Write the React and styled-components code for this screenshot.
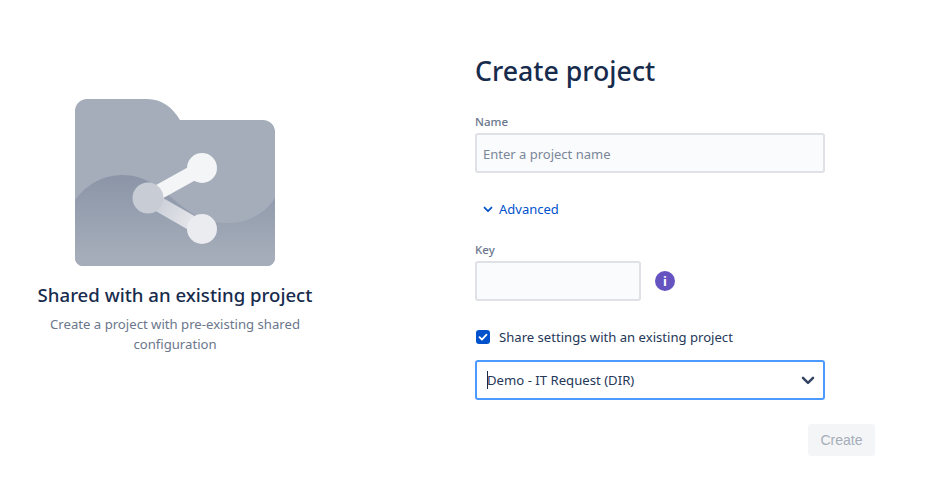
import styled, { createGlobalStyle } from "styled-components"

const GlobalStyle = createGlobalStyle`
    html, body {
        margin: 0;
        padding: 0;
        background: #fff;
        font-family: "Noto Sans", "Open Sans", sans-serif;
    }
`
const Page = styled.div`
    display: flex;
    width: 934px;
    height: 497px;
    overflow: hidden;
`
const Intro = styled.div`
    width: 350px;
    margin-right: 125px;
    padding-top: 99px;
    display: flex;
    flex-direction: column;
    align-items: center;
    box-sizing: border-box;
`
const Folder = styled.svg`
    display: block;
    width: 200px;
    height: 167px;
`
const IntroTitle = styled.h2`
    margin: 16px 0 0;
    font-size: 18.6px;
    line-height: 26px;
    font-weight: 500;
    color: #172b4d;
`
const IntroText = styled.p`
    margin: 6px 0 0;
    width: 290px;
    font-size: 13.15px;
    line-height: 20px;
    text-align: center;
    color: #6b778c;
`
const Form = styled.div`
    width: 400px;
    padding-top: 50px;
    display: flex;
    flex-direction: column;
    box-sizing: border-box;
`
const Title = styled.h1`
    margin: 0;
    height: 42px;
    font-size: 26.7px;
    line-height: 42px;
    font-weight: 500;
    color: #172b4d;
`
const Label = styled.label`
    display: block;
    font-size: 11.5px;
    line-height: 16px;
    font-weight: 500;
    color: #6b778c;
    margin-top: ${props => props.top}px;
    margin-bottom: 3px;
`
const Input = styled.input`
    display: block;
    box-sizing: border-box;
    width: ${props => props.width}px;
    height: 40px;
    padding: 1px 6px 0;
    border: 2px solid #dfe1e6;
    border-radius: 3px;
    background: #fafbfc;
    font: 13px "Noto Sans", sans-serif;
    color: #172b4d;
    outline: none;
    &::placeholder {
        color: #7a869a;
        opacity: 1;
    }
`
const Advanced = styled.div`
    display: flex;
    align-items: center;
    gap: 4px;
    margin: 26px 0 0 6px;
    height: 20px;
    font-size: 13px;
    color: #0052cc;
`
const KeyRow = styled.div`
    display: flex;
    align-items: center;
    gap: 14px;
`
const InfoBadge = styled.span`
    width: 20px;
    height: 20px;
    border-radius: 50%;
    background: #6554c0;
    color: #fff;
    display: flex;
    align-items: center;
    justify-content: center;
    font-size: 13px;
    font-weight: 700;
    line-height: 1;
`
const ShareRow = styled.div`
    display: flex;
    align-items: center;
    gap: 9px;
    margin: 26px 0 0 1px;
    height: 20px;
    font-size: 13.1px;
    color: #253858;
`
const Check = styled.span`
    width: 14px;
    height: 14px;
    border-radius: 3px;
    background: #0052cc;
    display: flex;
    align-items: center;
    justify-content: center;
`
const Select = styled.div`
    position: relative;
    box-sizing: border-box;
    width: 350px;
    height: 40px;
    margin-top: 13px;
    padding: 0 5px 0 10px;
    display: flex;
    align-items: center;
    justify-content: space-between;
    border: 2px solid #4c9aff;
    border-radius: 3px;
    font-size: 13.15px;
    color: #253858;
`
const Caret = styled.span`
    position: absolute;
    left: 10px;
    top: 9px;
    width: 1px;
    height: 18px;
    background: #172b4d;
`
const Footer = styled.div`
    display: flex;
    justify-content: flex-end;
    margin-top: 24px;
`
const CreateButton = styled.button`
    width: 67px;
    height: 32px;
    border: 0;
    border-radius: 3px;
    background: #f4f5f7;
    color: #a5adba;
    font: 14px "Liberation Sans", Arial, sans-serif;
`

const Chevron = ({ color, size }) => (
    <svg width={size} height={size} viewBox="0 0 24 24">
        <path d="M6 9.5l6 6 6-6" fill="none" stroke={color} strokeWidth="3" strokeLinecap="round" strokeLinejoin="round" />
    </svg>
)

const FolderArt = () => (
    <Folder viewBox="0 0 200 167">
        <defs>
            <linearGradient id="wave" x1="0" y1="0" x2="0" y2="1">
                <stop offset="0" stopColor="#8b95a7" />
                <stop offset="0.9" stopColor="#a5adba" />
            </linearGradient>
            <linearGradient id="link" gradientUnits="userSpaceOnUse" x1="73" y1="99" x2="127" y2="130">
                <stop offset="0" stopColor="#c5c9d2" />
                <stop offset="1" stopColor="#ebecf0" />
            </linearGradient>
            <clipPath id="body">
                <path d="M0 12a12 12 0 0 1 12-12h60c15 0 26 9 33 21h83a12 12 0 0 1 12 12v126a8 8 0 0 1-8 8H8a8 8 0 0 1-8-8z" />
            </clipPath>
        </defs>
        <g clipPath="url(#body)">
            <rect width="200" height="167" fill="#a5adba" />
            <path d="M0 101c12-16 28-25 47-25 24 0 38 13 56 28 16 13 32 21 52 20 20-1 35-10 45-25v68H0z" fill="url(#wave)" />
        </g>
        <path d="M73 99l54-30" stroke="#f4f5f7" strokeWidth="15" fill="none" />
        <circle cx="127" cy="69" r="15" fill="#f4f5f7" />
        <path d="M73 99l54 31" stroke="url(#link)" strokeWidth="15" fill="none" />
        <circle cx="73" cy="99" r="15.5" fill="#c8ccd5" />
        <circle cx="127" cy="130" r="15" fill="#ebecf0" />
    </Folder>
)

const App = () => {
  return (
    <Page>
        <GlobalStyle/>
        <Intro>
            <FolderArt/>
            <IntroTitle>Shared with an existing project</IntroTitle>
            <IntroText>Create a project with pre-existing shared configuration</IntroText>
        </Intro>
        <Form>
            <Title>Create project</Title>
            <Label top={22}>Name</Label>
            <Input width={350} placeholder="Enter a project name"/>
            <Advanced>
                <Chevron color="#0052cc" size={14}/>
                Advanced
            </Advanced>
            <Label top={23}>Key</Label>
            <KeyRow>
                <Input width={166}/>
                <InfoBadge>i</InfoBadge>
            </KeyRow>
            <ShareRow>
                <Check>
                    <svg width="12" height="12" viewBox="0 0 12 12">
                        <path d="M2.5 6.2l2.4 2.4 4.6-5" fill="none" stroke="#fff" strokeWidth="1.8" strokeLinecap="round" strokeLinejoin="round"/>
                    </svg>
                </Check>
                Share settings with an existing project
            </ShareRow>
            <Select>
                <Caret/>
                Demo - IT Request (DIR)
                <Chevron color="#344563" size={20}/>
            </Select>
            <Footer>
                <CreateButton disabled>Create</CreateButton>
            </Footer>
        </Form>
    </Page>
  )
}

export default App
